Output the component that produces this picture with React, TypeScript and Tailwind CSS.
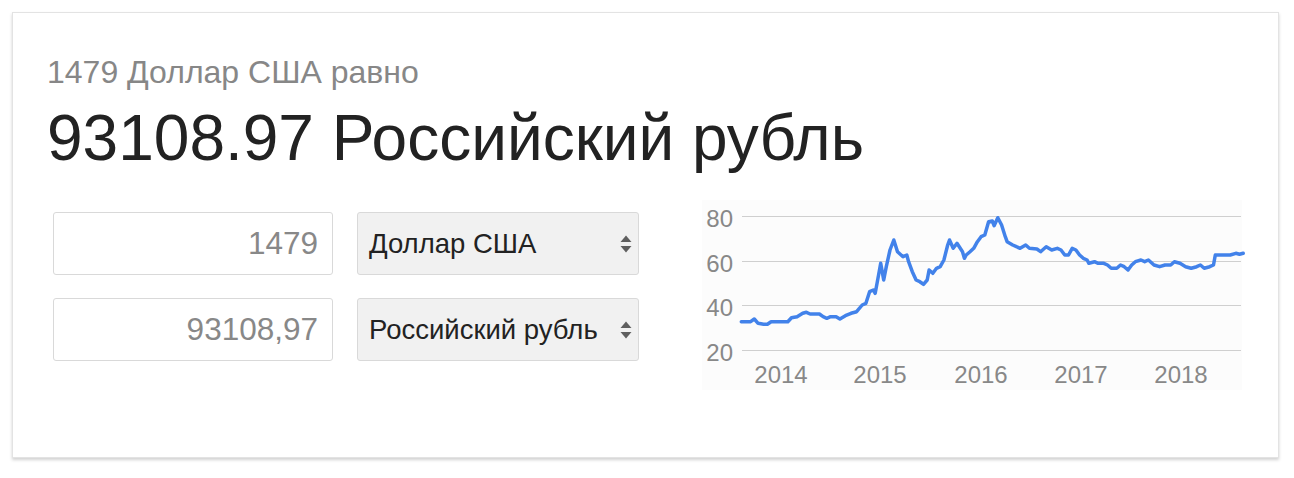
import React from 'react';

const font = { fontFamily: '"Liberation Sans", Arial, sans-serif' };

// rough trace of the USD/RUB line, in zoomed-reference units
const raw: [number, number][] = [
  [165, 380], [190, 380], [200, 372], [210, 385], [225, 388], [235, 388], [245, 380], [290, 380],
  [300, 368], [315, 365], [330, 355], [340, 352], [350, 357], [375, 357], [385, 365], [395, 370],
  [405, 365], [420, 365], [430, 372], [445, 362], [460, 355], [475, 350], [490, 330], [500, 325],
  [510, 290], [520, 285], [525, 295], [535, 235], [540, 205], [548, 255], [555, 215], [565, 165],
  [575, 135], [585, 170], [600, 185], [610, 180], [615, 200], [625, 230], [635, 255], [645, 260],
  [655, 268], [665, 255], [670, 225], [680, 235], [690, 220], [700, 215], [710, 195], [720, 150],
  [725, 135], [735, 160], [745, 145], [760, 170], [765, 190], [770, 180], [780, 170], [790, 160],
  [800, 140], [810, 125], [820, 120], [830, 80], [840, 78], [845, 92], [855, 68], [865, 90],
  [875, 125], [880, 140], [895, 150], [905, 155], [915, 160], [930, 150], [940, 160], [960, 162],
  [970, 170], [985, 155], [1000, 165], [1015, 160], [1025, 165], [1035, 180], [1045, 180],
  [1055, 160], [1065, 165], [1075, 180], [1085, 190], [1095, 195], [1100, 205], [1115, 200],
  [1125, 205], [1140, 205], [1150, 210], [1160, 220], [1175, 220], [1185, 210], [1195, 215],
  [1205, 225], [1215, 210], [1225, 200], [1240, 195], [1250, 200], [1260, 195], [1275, 210],
  [1290, 215], [1305, 210], [1320, 210], [1330, 200], [1345, 205], [1360, 215], [1375, 220],
  [1390, 215], [1400, 210], [1410, 220], [1425, 215], [1435, 210], [1440, 180], [1445, 180],
  [1455, 180], [1480, 180], [1495, 175], [1505, 178], [1515, 175],
];

const linePoints = raw.map(([x, y]) => `${(x / 2.69 - 18).toFixed(1)},${(y / 3 - 5).toFixed(1)}`).join(' ');

const gridY = [16, 61, 105, 150];
const yLabels = ['80', '60', '40', '20'];
const years = [
  { label: '2014', x: 83 },
  { label: '2015', x: 182 },
  { label: '2016', x: 283 },
  { label: '2017', x: 383 },
  { label: '2018', x: 483 },
];

function SelectArrows() {
  return (
    <svg width="14" height="22" viewBox="0 0 14 22">
      <path d="M1.5 9 L7 2.5 L12.5 9 Z" fill="#5f5f5f" />
      <path d="M1.5 13 L7 19.5 L12.5 13 Z" fill="#5f5f5f" />
    </svg>
  );
}

function CurrencyRow({ amount, currency }: { amount: string; currency: string }) {
  return (
    <div className="flex gap-6">
      <div className="w-[280px] h-[63px] border border-[#d9d9d9] rounded-[3px] flex items-center justify-end pr-[14px]">
        <span className="text-[31.5px] text-[#888]">{amount}</span>
      </div>
      <div className="w-[282px] h-[63px] border border-[#d9d9d9] rounded-[3px] bg-[#f1f1f1] flex items-center justify-between pl-[11px] pr-[5px]">
        <span className="text-[27.5px] text-[#222]">{currency}</span>
        <SelectArrows />
      </div>
    </div>
  );
}

function Chart() {
  return (
    <svg width="547" height="192" viewBox="0 0 547 192" className="block" style={font}>
      <rect x="4" y="0" width="540" height="190" fill="#fcfcfc" />
      {gridY.map((y, i) => (
        <g key={y}>
          <line x1="44" x2="543" y1={y + 0.5} y2={y + 0.5} stroke="#cfcfcf" strokeWidth="1" />
          <text x="35" y={y + 10.5} textAnchor="end" fontSize="24" fill="#888">{yLabels[i]}</text>
        </g>
      ))}
      {years.map((yr) => (
        <text key={yr.label} x={yr.x} y="183" textAnchor="middle" fontSize="24" fill="#888">{yr.label}</text>
      ))}
      <polyline points={linePoints} fill="none" stroke="#4282ea" strokeWidth="3.5" strokeLinejoin="round" strokeLinecap="round" />
    </svg>
  );
}

export default function App() {
  return (
    <div className="min-h-screen bg-white pt-3 pl-3" style={font}>
      <div className="w-[1267px] h-[446px] border border-[#e3e3e3] shadow-[0_2px_3px_rgba(0,0,0,0.18)] pl-[34px] pt-[40px]">
        <div className="text-[32px] leading-[38px] text-[#878787]">1479 Доллар США равно</div>
        <div className="mt-[11px] text-[64px] leading-[72px] text-[#222]">93108.97 Российский рубль</div>
        <div className="mt-[26px] flex items-start">
          <div className="ml-[6px] mt-3 flex flex-col gap-[23px]">
            <CurrencyRow amount="1479" currency="Доллар США" />
            <CurrencyRow amount="93108,97" currency="Российский рубль" />
          </div>
          <div className="ml-[59px]">
            <Chart />
          </div>
        </div>
      </div>
    </div>
  );
}
